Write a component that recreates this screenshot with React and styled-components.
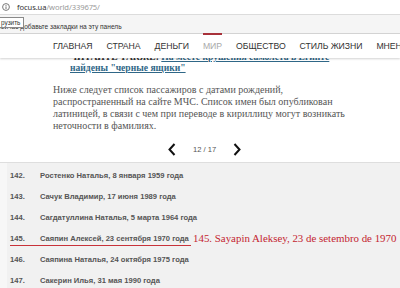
import styled, { createGlobalStyle } from "styled-components";

const GlobalStyle = createGlobalStyle`
  html, body {
    margin: 0;
    padding: 0;
    background: #ffffff;
  }
  body {
    width: 400px;
    height: 288px;
    overflow: hidden;
    font-family: "Liberation Sans", Arial, sans-serif;
  }
`;

const navItems = [
  "ГЛАВНАЯ",
  "СТРАНА",
  "ДЕНЬГИ",
  "МИР",
  "ОБЩЕСТВО",
  "СТИЛЬ ЖИЗНИ",
  "МНЕНИЯ",
];

const victims = [
  { num: "142.", name: "Ростенко Наталья, 8 января 1959 года" },
  { num: "143.", name: "Сачук Владимир, 17 июня 1989 года" },
  { num: "144.", name: "Сагдатуллина Наталья, 5 марта 1964 года" },
  {
    num: "145.",
    name: "Саяпин Алексей, 23 сентября 1970 года",
    note: "145. Sayapin Aleksey, 23 de setembro de 1970",
  },
  { num: "146.", name: "Саяпина Наталья, 24 октября 1975 года" },
  { num: "147.", name: "Сакерин Илья, 31 мая 1990 года" },
];

const Page = styled.div`
  width: 400px;
  height: 288px;
  display: flex;
  flex-direction: column;
  overflow: hidden;
`;

const AddressBar = styled.div`
  height: 14px;
  flex: none;
  display: flex;
  align-items: center;
  gap: 7px;
  padding-left: 2px;
  border-bottom: 1px solid #dcdcdc;
  background: #fff;
`;

const Url = styled.div`
  font-family: "Noto Sans", "Liberation Sans", sans-serif;
  font-size: 7.6px;
  color: #9a9a9a;
  letter-spacing: -0.1px;

  b {
    font-weight: normal;
    color: #333;
  }
`;

const BookmarksBar = styled.div`
  position: relative;
  height: 19px;
  flex: none;
  background: #f5f5f5;
  border-bottom: 1px solid #d6d6d6;
  display: flex;
  align-items: flex-end;
  padding-bottom: 3px;
  box-sizing: border-box;
`;

const BookmarksHint = styled.span`
  font-size: 6.6px;
  color: #333;
  margin-left: -4px;
  white-space: nowrap;
`;

const Tooltip = styled.span`
  position: absolute;
  left: -2px;
  top: 2px;
  padding: 0 3px 0 2px;
  height: 9px;
  line-height: 9px;
  font-size: 6.4px;
  color: #333;
  background: #fff;
  border: 1px solid #8a8a8a;
`;

const SiteNav = styled.nav`
  position: relative;
  z-index: 1;
  height: 24px;
  flex: none;
  display: flex;
  align-items: center;
  gap: 14px;
  padding-left: 53px;
  background: #fff;
  box-shadow: 0 1px 2px rgba(0, 0, 0, 0.18);
  white-space: nowrap;
`;

const NavItem = styled.a`
  position: relative;
  font-size: 8.7px;
  color: ${(p) => (p.$active ? "#a9a9a9" : "#333")};
  text-decoration: none;
  letter-spacing: -0.05px;

  &::before {
    content: "";
    display: ${(p) => (p.$active ? "block" : "none")};
    position: absolute;
    left: 0;
    right: 0;
    top: -8px;
    height: 2px;
    background: #a8313a;
  }
`;

const Article = styled.article`
  height: 104px;
  flex: none;
  overflow: hidden;
  padding-left: 53px;
  font-family: "Liberation Serif", "DejaVu Serif", serif;
`;

const ReadAlso = styled.div`
  margin-top: -7px;
  width: 273px;
  padding-left: 17px;
  position: relative;
  font-size: 9.6px;
  line-height: 11px;
  font-weight: bold;
  color: #333;

  &::before {
    content: "•";
    position: absolute;
    left: 2px;
    top: 0;
  }

  a {
    color: #2f6787;
    text-decoration: underline;
  }
`;

const Lead = styled.p`
  margin: 11px 0 0;
  width: 300px;
  font-size: 10px;
  line-height: 12px;
  color: #555;
`;

const Pager = styled.div`
  margin-top: 10px;
  height: 14px;
  display: flex;
  align-items: center;
  gap: 17px;
  padding-left: 115px;
`;

const PageCount = styled.span`
  font-family: "Liberation Sans", Arial, sans-serif;
  font-size: 7.6px;
  color: #555;
`;

const Chevron = ({ dir }) => (
  <svg width="8" height="13" viewBox="0 0 8 13">
    <polyline
      points={dir === "left" ? "6.5,1 1.5,6.5 6.5,12" : "1.5,1 6.5,6.5 1.5,12"}
      fill="none"
      stroke="#111"
      strokeWidth="2"
    />
  </svg>
);

const ListArea = styled.section`
  flex: 1;
  background: #f7f7f7;
  border-top: 1px solid #dedede;
`;

const ListPanel = styled.ol`
  margin: 0 0 0 7px;
  padding: 2px 0 0 3px;
  height: 100%;
  list-style: none;
  background: #f1f1f1;
`;

const Row = styled.li`
  height: 21px;
  display: flex;
  align-items: center;
  white-space: nowrap;
`;

const Entry = styled.div`
  display: flex;
  align-items: center;
  width: ${(p) => (p.$marked ? "181px" : "auto")};
  height: 12px;
  border-bottom: ${(p) => (p.$marked ? "1.5px solid #c8323a" : "none")};
  margin-top: ${(p) => (p.$marked ? "1.5px" : "0")};
`;

const Num = styled.span`
  width: 30px;
  font-size: 7.6px;
  font-weight: bold;
  color: #555;
`;

const Name = styled.span`
  font-size: 7.6px;
  font-weight: bold;
  color: #555;
`;

const Note = styled.span`
  margin-left: 2px;
  margin-top: -2px;
  font-family: "Liberation Serif", "DejaVu Serif", serif;
  font-size: 10.9px;
  color: #c42530;
`;

export default function App() {
  return (
    <Page>
      <GlobalStyle />
      <AddressBar>
        <svg width="8" height="8" viewBox="0 0 8 8">
          <circle cx="4" cy="4" r="3.4" fill="none" stroke="#777" strokeWidth="1" />
          <rect x="3.5" y="3.4" width="1" height="2.6" fill="#777" />
          <rect x="3.5" y="2" width="1" height="0.9" fill="#777" />
        </svg>
        <Url>
          <b>focus.ua</b>/world/339675/
        </Url>
      </AddressBar>
      <BookmarksBar>
        <BookmarksHint>Сейчас добавьте закладки на эту панель</BookmarksHint>
        <Tooltip>рузить</Tooltip>
      </BookmarksBar>
      <SiteNav>
        {navItems.map((item) => (
          <NavItem key={item} $active={item === "МИР"}>
            {item}
          </NavItem>
        ))}
      </SiteNav>
      <Article>
        <ReadAlso>
          ЧИТАЙТЕ ТАКЖЕ: <a>На месте крушения самолета в Египте найдены "черные ящики"</a>
        </ReadAlso>
        <Lead>
          Ниже следует список пассажиров с датами рождений, распространенный на
          сайте МЧС. Список имен был опубликован латиницей, в связи с чем при
          переводе в кириллицу могут возникать неточности в фамилиях.
        </Lead>
        <Pager>
          <Chevron dir="left" />
          <PageCount>12 / 17</PageCount>
          <Chevron dir="right" />
        </Pager>
      </Article>
      <ListArea>
        <ListPanel>
          {victims.map((v) => (
            <Row key={v.num}>
              <Entry $marked={!!v.note}>
                <Num>{v.num}</Num>
                <Name>{v.name}</Name>
              </Entry>
              {v.note && <Note>{v.note}</Note>}
            </Row>
          ))}
        </ListPanel>
      </ListArea>
    </Page>
  );
}
